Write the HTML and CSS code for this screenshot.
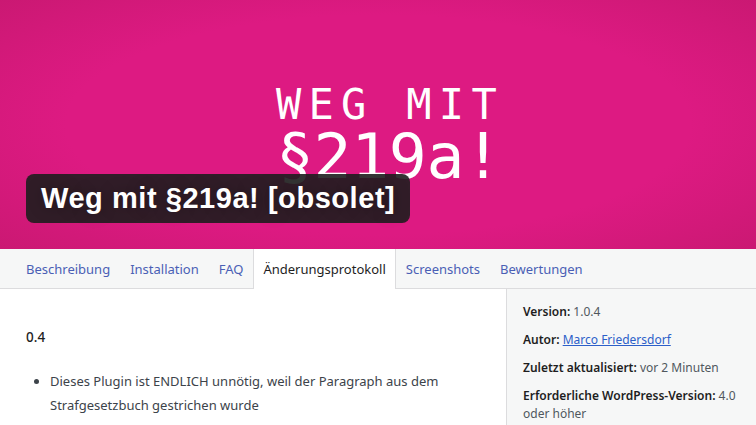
FILE: index.html
```html
<!DOCTYPE html>
<html lang="de">
<head>
<meta charset="utf-8">
<title>Weg mit §219a! [obsolet]</title>
<link rel="stylesheet" href="styles.css">
</head>
<body>
<header class="plugin-header">
  <div class="banner">
    <div class="banner-text">
      <div class="banner-line1">WEG MIT</div>
      <div class="banner-line2">§219a!</div>
    </div>
    <h1 class="plugin-title">Weg mit §219a! [obsolet]</h1>
  </div>
  <nav class="tabs">
    <a class="tab" href="#">Beschreibung</a>
    <a class="tab" href="#">Installation</a>
    <a class="tab" href="#">FAQ</a>
    <a class="tab active" href="#">Änderungsprotokoll</a>
    <a class="tab" href="#">Screenshots</a>
    <a class="tab" href="#">Bewertungen</a>
  </nav>
</header>
<main class="content">
  <section class="changelog">
    <h4 class="version">0.4</h4>
    <ul class="changes">
      <li>Dieses Plugin ist ENDLICH unnötig, weil der Paragraph aus dem Strafgesetzbuch gestrichen wurde</li>
    </ul>
  </section>
  <aside class="meta">
    <p><strong>Version:</strong> 1.0.4</p>
    <p><strong>Autor:</strong> <a href="#">Marco Friedersdorf</a></p>
    <p><strong>Zuletzt aktualisiert:</strong> vor 2 Minuten</p>
    <p><strong>Erforderliche WordPress-Version:</strong> 4.0 oder höher</p>
  </aside>
</main>
</body>
</html>
```
FILE: styles.css
```css
html, body {
  margin: 0;
  padding: 0;
  background: #fff;
}
body {
  font-family: "Noto Sans", "Open Sans", sans-serif;
  font-size: 13px;
  color: #3c434a;
  overflow: hidden;
}
.plugin-header {
  display: flex;
  flex-direction: column;
}
.banner {
  position: relative;
  height: 249px;
  background: radial-gradient(ellipse 75% 80% at 50% 50%, #dd1a82 55%, #c6186f 100%);
  display: flex;
  align-items: center;
  justify-content: center;
}
.banner-text {
  font-family: "DejaVu Sans Mono", monospace;
  color: #fff;
  margin-top: 20px;
  margin-left: 24px;
}
.banner-line1 {
  font-size: 42px;
  letter-spacing: 7.3px;
  line-height: 44px;
}
.banner-line2 {
  font-size: 63px;
  letter-spacing: -0.3px;
  line-height: 60px;
}
.plugin-title {
  position: absolute;
  left: 26px;
  top: 174px;
  margin: 0;
  height: 49px;
  box-sizing: border-box;
  padding: 0 15px;
  display: flex;
  align-items: center;
  background: rgba(30, 30, 30, 0.9);
  border-radius: 8px;
  color: #fff;
  font-family: "Liberation Sans", Arial, sans-serif;
  font-weight: bold;
  font-size: 29px;
  letter-spacing: 0.55px;
  text-shadow: 0 0 16px rgba(0, 0, 0, 0.3);
}
.tabs {
  display: flex;
  height: 40px;
  box-sizing: border-box;
  background: #f6f7f7;
  border-bottom: 1px solid #dcdcde;
  padding-left: 16px;
}
.tab {
  display: flex;
  align-items: center;
  padding: 0 9px;
  color: #4a5fb5;
  text-decoration: none;
  font-size: 13px;
  border-left: 1px solid transparent;
  border-right: 1px solid transparent;
}
.tab.active {
  background: #fff;
  color: #1e1e1e;
  border-left-color: #dcdcde;
  border-right-color: #dcdcde;
  height: 40px;
}
.content {
  display: flex;
}
.changelog {
  width: 506px;
  box-sizing: border-box;
  padding: 36px 26px 0;
}
.version {
  margin: 0 0 20px;
  font-size: 13.5px;
  font-weight: 500;
  color: #1e1e1e;
  line-height: 24px;
}
.changes {
  margin: 0;
  padding-left: 24px;
  line-height: 24px;
}
.meta {
  flex: 1;
  background: #f6f7f7;
  border-left: 1px solid #dcdcde;
  padding: 14px 10px 0 16px;
  min-height: 140px;
}
.meta p {
  margin: 0 0 10px;
  font-size: 12px;
  line-height: 18px;
  color: #50575e;
}
.meta strong {
  color: #1e1e1e;
  font-weight: 600;
}
.meta a {
  color: #2c5fc9;
}
```
